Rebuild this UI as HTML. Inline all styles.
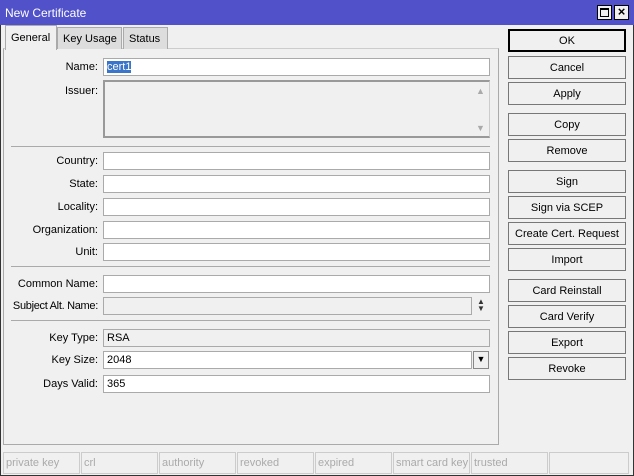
<!DOCTYPE html><html><head><style>
*{box-sizing:border-box}html,body{overflow:hidden}body{margin:0;width:634px;height:476px;background:#f0f0f0;font:11px "Liberation Sans",sans-serif;color:#000;position:relative;white-space:nowrap}
.a{position:absolute}
.title{left:0;top:0;width:634px;height:25px;background:#5151c9;color:#fff;padding:6px 0 0 5px;font-size:12px}
.win{left:0;top:0;width:634px;height:476px;border:1px solid #333;}
.tb{top:5px;width:15px;height:15px;background:#f0f0f0;border:1px solid #000}
.tab{top:27px;height:22px;border:1px solid #aaa;border-bottom:none;background:#ddd;padding:5px 5px}
.panel{left:3px;top:48px;width:496px;height:397px;border:1px solid #aaa;border-top:1px solid #ccc;background:#f0f0f0}
.btn{left:508px;width:118px;height:23px;border:1px solid #777;background:#f0f0f0;text-align:center;padding-top:5px}
.lb{width:98px;text-align:right;left:0}
.f{left:103px;width:387px;height:18px;background:#fff;border:1px solid #aaa;padding:2px 3px}
.g{background:#f0f0f0}
.sep{left:11px;width:479px;height:1px;background:#aaa}
.st{top:452px;height:22px;border:1px solid #ccc;color:#aaa;padding:4px 2px;overflow:hidden}
</style></head><body>
<div class="a win"></div>
<div class="a title">New Certificate</div>
<div class="a tb" style="left:597px"><div style="position:absolute;left:2px;top:2px;width:9px;height:9px;border:1px solid #000;border-top-width:2px"></div></div>
<div class="a tb" style="left:614px;font-weight:bold;text-align:center;line-height:12px;font-size:13px">×</div>
<div class="a panel"></div>
<div class="a tab" style="left:57px;width:65px">Key Usage</div>
<div class="a tab" style="left:123px;width:45px">Status</div>
<div class="a tab" style="left:5px;top:25px;height:25px;background:#f0f0f0;padding-top:6px;width:52px">General</div>
<div class="a lb" style="top:61px">Name:</div><div class="a f" style="top:58px"><span style="background:#3a75c9;color:#fff">cert1</span></div>
<div class="a lb" style="top:85px">Issuer:</div><div class="a f g" style="top:80px;height:58px;border:2px solid #999;border-right:1px solid #ccc"></div>
<div class="a" style="left:476px;top:86px;color:#aaa;font-size:9px">▲</div><div class="a" style="left:476px;top:123px;color:#aaa;font-size:9px">▼</div>
<div class="a sep" style="top:146px"></div>
<div class="a lb" style="top:155px">Country:</div><div class="a f" style="top:152px"></div>
<div class="a lb" style="top:178px">State:</div><div class="a f" style="top:175px"></div>
<div class="a lb" style="top:201px">Locality:</div><div class="a f" style="top:198px"></div>
<div class="a lb" style="top:224px">Organization:</div><div class="a f" style="top:221px"></div>
<div class="a lb" style="top:246px">Unit:</div><div class="a f" style="top:243px"></div>
<div class="a sep" style="top:266px"></div>
<div class="a lb" style="top:278px">Common Name:</div><div class="a f" style="top:275px"></div>
<div class="a lb" style="top:300px;letter-spacing:-0.3px">Subject Alt. Name:</div><div class="a f g" style="top:297px;width:369px"></div>
<div class="a" style="left:477px;top:298px;font-size:8px;line-height:7px;color:#333">▲<br>▼</div>
<div class="a sep" style="top:320px"></div>
<div class="a lb" style="top:332px">Key Type:</div><div class="a f g" style="top:329px">RSA</div>
<div class="a lb" style="top:354px">Key Size:</div><div class="a f" style="top:351px;width:369px">2048</div>
<div class="a" style="left:473px;top:351px;width:16px;height:18px;border:1px solid #888;font-size:9px;text-align:center;line-height:15px">▼</div>
<div class="a lb" style="top:378px">Days Valid:</div><div class="a f" style="top:375px">365</div>
<div class="a btn" style="top:29px;border:2px solid #000;padding-top:4px">OK</div>
<div class="a btn" style="top:56px">Cancel</div>
<div class="a btn" style="top:82px">Apply</div>
<div class="a btn" style="top:113px">Copy</div>
<div class="a btn" style="top:139px">Remove</div>
<div class="a btn" style="top:170px">Sign</div>
<div class="a btn" style="top:196px">Sign via SCEP</div>
<div class="a btn" style="top:222px">Create Cert. Request</div>
<div class="a btn" style="top:248px">Import</div>
<div class="a btn" style="top:279px">Card Reinstall</div>
<div class="a btn" style="top:305px">Card Verify</div>
<div class="a btn" style="top:331px">Export</div>
<div class="a btn" style="top:357px">Revoke</div>
<div class="a st" style="left:3px;width:77px">private key</div>
<div class="a st" style="left:81px;width:77px">crl</div>
<div class="a st" style="left:159px;width:77px">authority</div>
<div class="a st" style="left:237px;width:77px">revoked</div>
<div class="a st" style="left:315px;width:77px">expired</div>
<div class="a st" style="left:393px;width:77px">smart card key</div>
<div class="a st" style="left:471px;width:77px">trusted</div>
<div class="a st" style="left:549px;width:80px"></div>
</body></html>
